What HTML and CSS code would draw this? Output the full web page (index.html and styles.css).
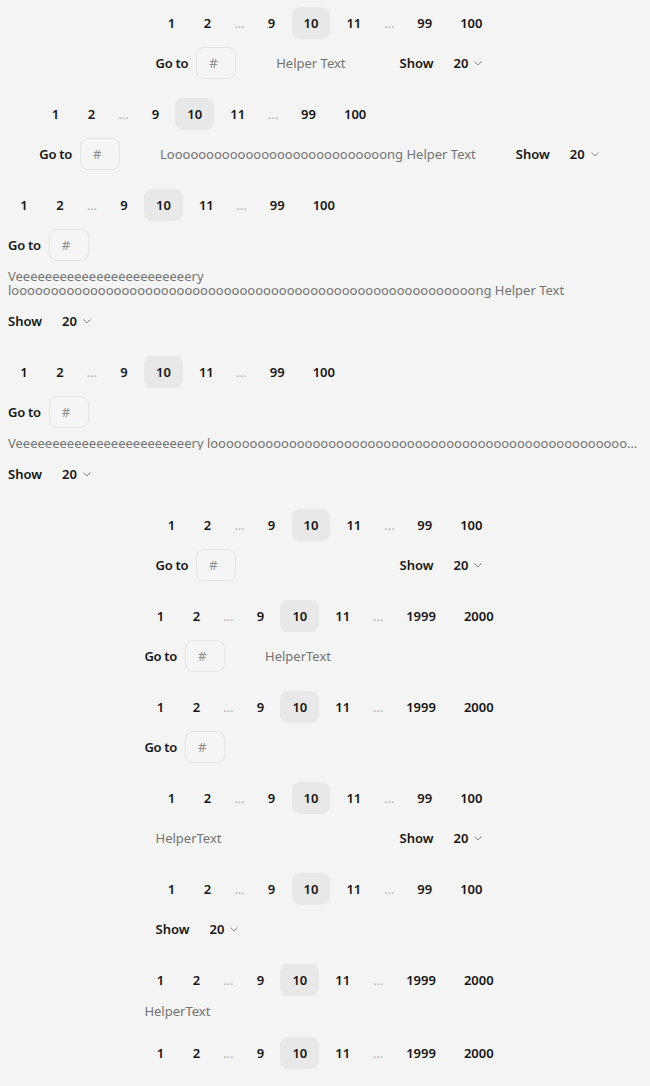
FILE: index.html
```html
<!DOCTYPE html>
<html lang="en">
<head>
<meta charset="utf-8">
<title>Pagination</title>
<link rel="stylesheet" href="styles.css">
</head>
<body>
<div class="stack">

  <nav class="pager">
    <div class="pages">
      <span class="page">1</span><span class="page">2</span><span class="dots">…</span><span class="page">9</span><span class="page active">10</span><span class="page">11</span><span class="dots">…</span><span class="page">99</span><span class="page">100</span>
    </div>
    <div class="controls">
      <div class="goto"><span class="label">Go to</span><input class="field" placeholder="#"></div>
      <span class="helper">Helper Text</span>
      <div class="show"><span class="label">Show</span><span class="select">20<svg class="chev" width="8" height="5" viewBox="0 0 8 5"><path d="M0.5 0.5L4 4L7.5 0.5"/></svg></span></div>
    </div>
  </nav>

  <nav class="pager">
    <div class="pages">
      <span class="page">1</span><span class="page">2</span><span class="dots">…</span><span class="page">9</span><span class="page active">10</span><span class="page">11</span><span class="dots">…</span><span class="page">99</span><span class="page">100</span>
    </div>
    <div class="controls">
      <div class="goto"><span class="label">Go to</span><input class="field" placeholder="#"></div>
      <span class="helper">Loooooooooooooooooooooooooooong Helper Text</span>
      <div class="show"><span class="label">Show</span><span class="select">20<svg class="chev" width="8" height="5" viewBox="0 0 8 5"><path d="M0.5 0.5L4 4L7.5 0.5"/></svg></span></div>
    </div>
  </nav>

  <nav class="pager stacked">
    <div class="pages">
      <span class="page">1</span><span class="page">2</span><span class="dots">…</span><span class="page">9</span><span class="page active">10</span><span class="page">11</span><span class="dots">…</span><span class="page">99</span><span class="page">100</span>
    </div>
    <div class="controls">
      <div class="goto"><span class="label">Go to</span><input class="field" placeholder="#"></div>
      <span class="helper">Veeeeeeeeeeeeeeeeeeeeeeeery looooooooooooooooooooooooooooooooooooooooooooooooooooooooooong Helper Text</span>
      <div class="show"><span class="label">Show</span><span class="select">20<svg class="chev" width="8" height="5" viewBox="0 0 8 5"><path d="M0.5 0.5L4 4L7.5 0.5"/></svg></span></div>
    </div>
  </nav>

  <nav class="pager stacked truncate">
    <div class="pages">
      <span class="page">1</span><span class="page">2</span><span class="dots">…</span><span class="page">9</span><span class="page active">10</span><span class="page">11</span><span class="dots">…</span><span class="page">99</span><span class="page">100</span>
    </div>
    <div class="controls">
      <div class="goto"><span class="label">Go to</span><input class="field" placeholder="#"></div>
      <span class="helper">Veeeeeeeeeeeeeeeeeeeeeeeery looooooooooooooooooooooooooooooooooooooooooooooooooooooooooong Helper Text</span>
      <div class="show"><span class="label">Show</span><span class="select">20<svg class="chev" width="8" height="5" viewBox="0 0 8 5"><path d="M0.5 0.5L4 4L7.5 0.5"/></svg></span></div>
    </div>
  </nav>

  <nav class="pager">
    <div class="pages">
      <span class="page">1</span><span class="page">2</span><span class="dots">…</span><span class="page">9</span><span class="page active">10</span><span class="page">11</span><span class="dots">…</span><span class="page">99</span><span class="page">100</span>
    </div>
    <div class="controls">
      <div class="goto"><span class="label">Go to</span><input class="field" placeholder="#"></div>
      <div class="show"><span class="label">Show</span><span class="select">20<svg class="chev" width="8" height="5" viewBox="0 0 8 5"><path d="M0.5 0.5L4 4L7.5 0.5"/></svg></span></div>
    </div>
  </nav>

  <nav class="pager">
    <div class="pages">
      <span class="page">1</span><span class="page">2</span><span class="dots">…</span><span class="page">9</span><span class="page active">10</span><span class="page">11</span><span class="dots">…</span><span class="page">1999</span><span class="page">2000</span>
    </div>
    <div class="controls">
      <div class="goto"><span class="label">Go to</span><input class="field" placeholder="#"></div>
      <span class="helper">HelperText</span>
    </div>
  </nav>

  <nav class="pager">
    <div class="pages">
      <span class="page">1</span><span class="page">2</span><span class="dots">…</span><span class="page">9</span><span class="page active">10</span><span class="page">11</span><span class="dots">…</span><span class="page">1999</span><span class="page">2000</span>
    </div>
    <div class="controls">
      <div class="goto"><span class="label">Go to</span><input class="field" placeholder="#"></div>
    </div>
  </nav>

  <nav class="pager">
    <div class="pages">
      <span class="page">1</span><span class="page">2</span><span class="dots">…</span><span class="page">9</span><span class="page active">10</span><span class="page">11</span><span class="dots">…</span><span class="page">99</span><span class="page">100</span>
    </div>
    <div class="controls">
      <span class="helper">HelperText</span>
      <div class="show"><span class="label">Show</span><span class="select">20<svg class="chev" width="8" height="5" viewBox="0 0 8 5"><path d="M0.5 0.5L4 4L7.5 0.5"/></svg></span></div>
    </div>
  </nav>

  <nav class="pager">
    <div class="pages">
      <span class="page">1</span><span class="page">2</span><span class="dots">…</span><span class="page">9</span><span class="page active">10</span><span class="page">11</span><span class="dots">…</span><span class="page">99</span><span class="page">100</span>
    </div>
    <div class="controls">
      <div class="show"><span class="label">Show</span><span class="select">20<svg class="chev" width="8" height="5" viewBox="0 0 8 5"><path d="M0.5 0.5L4 4L7.5 0.5"/></svg></span></div>
    </div>
  </nav>

  <nav class="pager">
    <div class="pages">
      <span class="page">1</span><span class="page">2</span><span class="dots">…</span><span class="page">9</span><span class="page active">10</span><span class="page">11</span><span class="dots">…</span><span class="page">1999</span><span class="page">2000</span>
    </div>
    <div class="controls">
      <span class="helper">HelperText</span>
    </div>
  </nav>

  <nav class="pager">
    <div class="pages">
      <span class="page">1</span><span class="page">2</span><span class="dots">…</span><span class="page">9</span><span class="page active">10</span><span class="page">11</span><span class="dots">…</span><span class="page">1999</span><span class="page">2000</span>
    </div>
  </nav>

</div>
</body>
</html>
```

FILE: styles.css
```css
html, body {
  background: #f4f4f4;
}

body {
  margin: 7px 8px 8px;
  font-family: "Noto Sans", "Open Sans", sans-serif;
  font-size: 13px;
  color: #161616;
}

.stack {
  display: flex;
  flex-direction: column;
  align-items: center;
  gap: 19px;
}

.pager {
  display: flex;
  flex-direction: column;
  gap: 8px;
}

.pager.stacked {
  align-self: stretch;
  min-width: 0;
}

.pages {
  display: flex;
  gap: 4px;
}

.page {
  box-sizing: border-box;
  min-width: 32px;
  height: 32px;
  padding: 0 12px;
  display: flex;
  align-items: center;
  justify-content: center;
  font-weight: 600;
  border-radius: 8px;
}

.page.active {
  background: #e8e8e8;
}

.dots {
  width: 24px;
  height: 32px;
  display: flex;
  align-items: center;
  justify-content: center;
  color: #b0b0b0;
}

.controls {
  display: flex;
  align-items: center;
  justify-content: space-between;
  gap: 40px;
}

.goto,
.show {
  display: flex;
  align-items: center;
  gap: 8px;
  flex: none;
}

.label {
  font-weight: 600;
}

.goto .label {
  letter-spacing: -0.3px;
}

.field {
  box-sizing: border-box;
  width: 40px;
  height: 32px;
  margin: 0;
  padding: 0 12px;
  border: 1px solid #e3e3e3;
  border-radius: 8px;
  background: #f5f5f5;
  font: inherit;
  color: #161616;
  outline: none;
}

.field::placeholder {
  color: #8d8d8d;
}

.helper {
  flex: 1 1 auto;
  color: #737373;
  line-height: 14px;
}

.select {
  box-sizing: border-box;
  height: 32px;
  padding: 0 12px;
  display: flex;
  align-items: center;
  gap: 6px;
  font-weight: 600;
}

.chev {
  display: block;
  fill: none;
  stroke: #8d8d8d;
  stroke-width: 1;
}

.stacked .controls {
  flex-direction: column;
  align-items: flex-start;
  gap: 8px;
}

.stacked .helper {
  align-self: stretch;
}

.truncate .helper {
  white-space: nowrap;
  overflow: hidden;
  text-overflow: ellipsis;
}
```
